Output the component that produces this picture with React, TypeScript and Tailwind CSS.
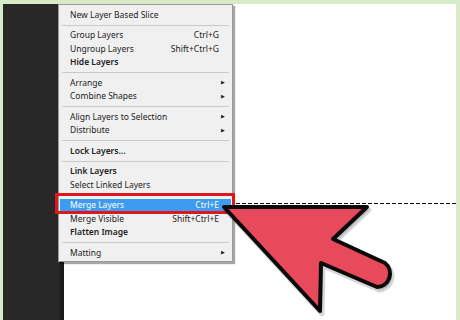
type MenuItem =
  | { kind: "sep" }
  | { kind: "item"; label: string; shortcut?: string; sub?: boolean; bold?: boolean; active?: boolean };

const items: MenuItem[] = [
  { kind: "item", label: "New Layer Based Slice" },
  { kind: "sep" },
  { kind: "item", label: "Group Layers", shortcut: "Ctrl+G" },
  { kind: "item", label: "Ungroup Layers", shortcut: "Shift+Ctrl+G" },
  { kind: "item", label: "Hide Layers", bold: true },
  { kind: "sep" },
  { kind: "item", label: "Arrange", sub: true },
  { kind: "item", label: "Combine Shapes", sub: true },
  { kind: "sep" },
  { kind: "item", label: "Align Layers to Selection", sub: true },
  { kind: "item", label: "Distribute", sub: true },
  { kind: "sep" },
  { kind: "item", label: "Lock Layers...", bold: true },
  { kind: "sep" },
  { kind: "item", label: "Link Layers", bold: true },
  { kind: "item", label: "Select Linked Layers" },
  { kind: "sep" },
  { kind: "item", label: "Merge Layers", shortcut: "Ctrl+E", active: true },
  { kind: "item", label: "Merge Visible", shortcut: "Shift+Ctrl+E" },
  { kind: "item", label: "Flatten Image", bold: true },
  { kind: "sep" },
  { kind: "item", label: "Matting", sub: true },
];

function LayerMenu() {
  return (
    <div
      className="absolute left-[58px] top-[4px] w-[175px] border border-[#9a9a9a] bg-[#f0f0f0] pt-[3px] pb-[1px] shadow-[2px_2px_1px_rgba(0,0,0,0.35)]"
      style={{ fontFamily: '"Noto Sans", "Open Sans", sans-serif' }}
    >
      {items.map((item, i) =>
        item.kind === "sep" ? (
          <div key={i} className="flex h-[7px] items-center px-[3px]">
            <div className="h-px w-full bg-[#c8c8c8]" />
          </div>
        ) : (
          <div
            key={i}
            className={
              "mx-[1px] flex h-[13.5px] items-center pl-[10px] pr-[12px] text-[8.5px] leading-none " +
              (item.active ? "bg-[#3d9bf0] text-white" : "text-[#222]")
            }
          >
            <span className={item.bold ? "font-semibold" : ""}>{item.label}</span>
            <span className="ml-auto">{item.shortcut}</span>
            {item.sub ? (
              <span className="-mr-[6px] ml-auto text-[5px] text-[#222]">&#9654;</span>
            ) : null}
          </div>
        )
      )}
    </div>
  );
}

function Arrow() {
  const d = "M224,207 L367,207 L333,239 L385,263 A13.5,13.5 0 0 1 377,287 L321,263 L320,311 Z";
  return (
    <svg className="pointer-events-none absolute left-0 top-0" width="460" height="320" viewBox="0 0 460 320">
      <path d={d} transform="translate(2,3)" fill="rgba(0,0,0,0.16)" stroke="rgba(0,0,0,0.16)" strokeWidth="5" strokeLinejoin="round" />
      <path d={d} fill="#e8495b" stroke="#0a0a0a" strokeWidth="4" strokeLinejoin="round" />
    </svg>
  );
}

export default function App() {
  return (
    <div className="relative h-[320px] w-[460px] overflow-hidden bg-[#d7ebc8]">
      <div className="flex h-full pl-[3px] pr-[4px] pt-[4px]">
        <div className="w-[61px] border-r-[4px] border-[#1b1b1b] bg-[#282828]" />
        <div className="relative flex-1 bg-white">
          <div className="absolute left-[172px] right-0 top-[199px] h-px bg-[repeating-linear-gradient(90deg,#000_0px,#000_4px,transparent_4px,transparent_6px)]" />
        </div>
      </div>

      <LayerMenu />

      {/* red highlight frame around Merge Layers */}
      <div className="absolute left-[55px] top-[193px] h-[21px] w-[180px] border-[3px] border-[#e0161f]" />

      <Arrow />
    </div>
  );
}
